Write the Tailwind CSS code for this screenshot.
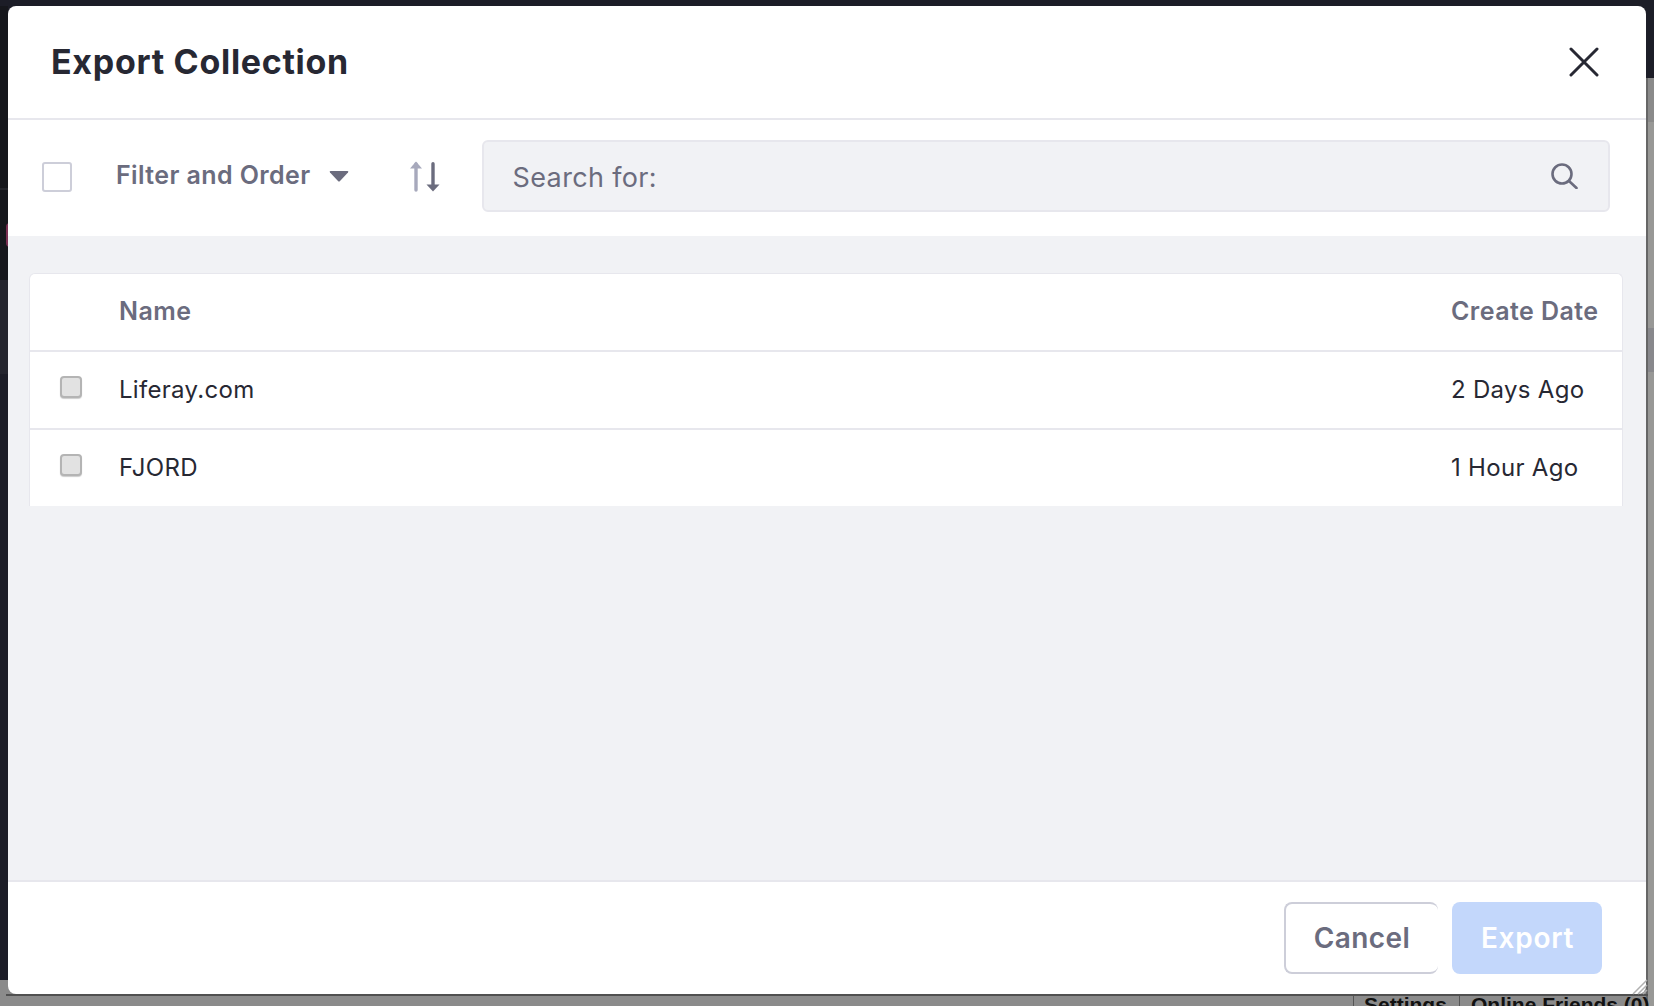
<!DOCTYPE html>
<html>
<head>
    <title>Export Collection</title>
    <script src="https://cdn.jsdelivr.net/npm/@tailwindcss/browser@4"></script>
</head>
<body class="relative w-[1654px] h-[1006px] overflow-hidden bg-[#1c1d27] font-['Inter',sans-serif]">

    <!-- Page behind the modal -->
    <div class="absolute left-0 top-[6px] w-[8px] h-[274px] bg-[#16171c]"></div>
    <div class="absolute left-0 top-[188px] w-[8px] h-[2px] bg-[#24252b]"></div>
    <div class="absolute left-0 top-[280px] w-[8px] h-[94px] bg-[#24252e]"></div>
    <div class="absolute left-[6px] top-[223px] w-[4px] h-[24px] rounded-l-full bg-[#7a2f52]"></div>
    <div class="absolute left-0 bottom-0 w-full h-[26px] bg-[#8b8b8b]"></div>
    <div class="absolute right-0 top-[78px] bottom-0 w-[8px] bg-[#989896] border-l-2 border-[#666666]"></div>
    <div class="absolute right-0 top-[78px] w-[6px] h-[44px] bg-[#8a8a8a]"></div>
    <div class="absolute right-0 top-[328px] w-[6px] h-[44px] bg-[#88888c]"></div>
    <div class="absolute left-[1353px] bottom-0 w-px h-[10px] bg-[#555555]"></div>
    <div class="absolute left-[1459px] bottom-0 w-px h-[10px] bg-[#555555]"></div>
    <div class="absolute left-[1364px] top-[992px] font-['Liberation_Sans',sans-serif] font-bold text-[21px] leading-[26px] whitespace-nowrap text-[#111111]">Settings</div>
    <div class="absolute left-[1471px] top-[992px] font-['Liberation_Sans',sans-serif] font-bold text-[21px] leading-[26px] whitespace-nowrap text-[#111111]">Online Friends (0)</div>

    <!-- Modal -->
    <div class="absolute left-[8px] top-[6px] w-[1638px] h-[988px] flex flex-col bg-white rounded-[8px] overflow-hidden">
        <div class="h-[112px] shrink-0 flex items-center justify-between pl-[43px] pr-[47px] pb-[1px]">
            <h1 class="text-[34px] font-bold text-[#272833] tracking-[0.7px]">Export Collection</h1>
            <svg class="w-[30px] h-[30px]" viewBox="0 0 30 30" fill="none" stroke="#272833" stroke-width="3" stroke-linecap="round">
                <path d="M2 2 L28 28 M28 2 L2 28"/>
            </svg>
        </div>

        <div class="h-[118px] shrink-0 flex items-center border-t-2 border-[#e7e7ed] pl-[34px] pr-[36px] pb-[4px]">
            <div class="mt-[2px] w-[30px] h-[30px] rounded-[3px] border-2 border-[#cdced9] bg-white"></div>
            <span class="ml-[44px] text-[25px] font-semibold text-[#6b6c7e] tracking-[0.4px] whitespace-nowrap">Filter and Order</span>
            <svg class="ml-[18px] w-[20px] h-[11px]" viewBox="0 0 20 11" fill="#6b6c7e">
                <path d="M1.5 0 H18.5 Q20 0 19 1.5 L11 10 Q10 11 9 10 L1 1.5 Q0 0 1.5 0 Z"/>
            </svg>
            <svg class="ml-[60px] w-[32px] h-[32px]" viewBox="0 0 32 32" fill="none" stroke-linecap="round">
                <path d="M7 4 V30" stroke="#a7a9bc" stroke-width="3.4"/>
                <path d="M1 8.5 L7 1.5 L13 8.5 Z" fill="#a7a9bc"/>
                <path d="M24 3.7 V26" stroke="#6b6c7e" stroke-width="3.4"/>
                <path d="M17.5 24.5 H30.5 L24 31.5 Z" fill="#6b6c7e"/>
            </svg>
            <div class="ml-[41px] flex-1 h-[72px] flex items-center justify-between rounded-[6px] border-2 border-[#e7e7ed] bg-[#f1f2f5] pl-[29px] pr-[30px]">
                <span class="mt-[5px] text-[27px] text-[#6b6c7e] tracking-[0.35px]">Search for:</span>
                <svg class="w-[27px] h-[26px]" viewBox="0 0 27 26" fill="none" stroke="#6b6c7e" stroke-width="2.6" stroke-linecap="round">
                    <circle cx="11" cy="11" r="9.5"/>
                    <path d="M18 18 L25.5 25"/>
                </svg>
            </div>
        </div>

        <div class="flex-1 bg-[#f1f2f5] pt-[37px] pl-[21px] pr-[23px]">
            <div class="bg-white rounded-t-[6px] border-x border-t border-[#e7e7ed]">
                <div class="h-[76px] flex items-center justify-between pl-[89px] pr-[24px] text-[25px] font-semibold text-[#6b6c7e] tracking-[0.45px]">
                    <span>Name</span>
                    <span class="w-[147px] whitespace-nowrap">Create Date</span>
                </div>
                <div class="h-[78px] flex items-center border-t-2 border-[#e7e7ed] pl-[30px] pr-[24px] text-[24px] text-[#272833] tracking-[0.3px]">
                    <div class="w-[22px] h-[22px] -mt-[6px] rounded-[4px] border-2 border-[#b4b4b4] bg-[#e2e2e2] shadow-[0_1px_1px_rgba(0,0,0,0.2)]"></div>
                    <span class="ml-[37px]">Liferay.com</span>
                    <span class="ml-auto w-[147px] whitespace-nowrap">2 Days Ago</span>
                </div>
                <div class="h-[78px] flex items-center border-t-2 border-[#e7e7ed] pl-[30px] pr-[24px] text-[24px] text-[#272833] tracking-[0.3px]">
                    <div class="w-[22px] h-[22px] -mt-[6px] rounded-[4px] border-2 border-[#b4b4b4] bg-[#e2e2e2] shadow-[0_1px_1px_rgba(0,0,0,0.2)]"></div>
                    <span class="ml-[37px]">FJORD</span>
                    <span class="ml-auto w-[147px] whitespace-nowrap">1 Hour Ago</span>
                </div>
            </div>
        </div>

        <div class="h-[114px] shrink-0 flex items-start justify-end gap-[14px] border-t-2 border-[#e7e7ed] pt-[20px] pr-[44px]">
            <button class="w-[154px] h-[72px] rounded-[8px] border-2 border-r-0 border-[#cdced9] text-[28px] font-semibold text-[#6b6c7e] tracking-[0.4px]">Cancel</button>
            <button class="w-[150px] h-[72px] rounded-[8px] bg-[#c3d7fb] text-[28px] font-semibold text-white tracking-[0.7px] pl-[1px]">Export</button>
        </div>
    </div>

    <!-- Bottom edge and resize grip -->
    <div class="absolute left-[6px] top-[994px] w-[1642px] h-[2px] bg-[#505050]"></div>
    <svg class="absolute left-[1632px] top-[979px] w-[16px] h-[16px]" viewBox="0 0 16 16" fill="none" stroke="#b0b0b0" stroke-width="1.5">
        <path d="M1 15 L15 1 M6 15 L15 6 M11 15 L15 11"/>
    </svg>
</body>
</html>
